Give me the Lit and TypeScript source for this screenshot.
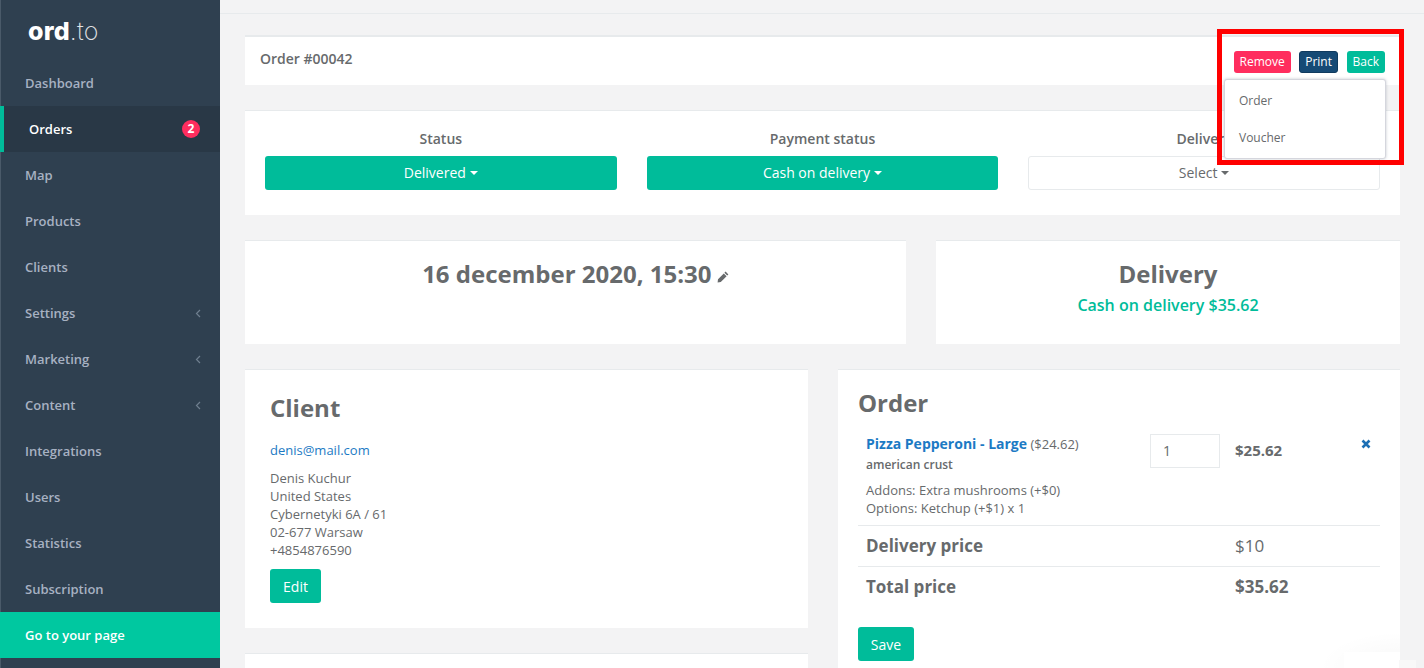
import { LitElement, html, css } from "lit";
import { customElement } from "lit/decorators.js";

const NAV: [string, boolean][] = [
  ["Dashboard", false],
  ["Orders", false],
  ["Map", false],
  ["Products", false],
  ["Clients", false],
  ["Settings", true],
  ["Marketing", true],
  ["Content", true],
  ["Integrations", false],
  ["Users", false],
  ["Statistics", false],
  ["Subscription", false],
];

@customElement("app-root")
export class AppRoot extends LitElement {
  static styles = css`
    :host {
      display: block;
      width: 1424px;
      height: 668px;
      overflow: hidden;
      position: relative;
      background: #f3f3f4;
      font-family: "Open Sans", sans-serif;
      font-size: 13px;
      color: #676a6c;
    }
    * { box-sizing: border-box; }
    .layout { display: flex; height: 668px; overflow: hidden; }
    .side {
      width: 220px;
      flex: none;
      background: #2f4050;
      border-left: 1px solid #4a5a69;
      height: 668px;
    }
    .logo {
      height: 60px;
      padding: 13px 0 0 27px;
      font-family: "Inter", sans-serif;
      font-size: 25px;
      line-height: 36px;
      color: #fff;
      font-weight: 800;
      letter-spacing: 0.2px;
    }
    .logo span { font-weight: 200; opacity: 0.85; }
    .nav { display: flex; flex-direction: column; }
    .item {
      height: 46px;
      display: flex;
      align-items: center;
      justify-content: space-between;
      padding: 0 19px 0 24px;
      font-weight: 600;
      color: #a7b1c2;
      line-height: 18px;
    }
    .item.active {
      background: #293846;
      color: #fff;
      margin-left: -1px;
      border-left: 4px solid #00bc9a;
      padding-left: 25px;
      padding-right: 20px;
    }
    .badge {
      width: 18px;
      height: 18px;
      border-radius: 50%;
      background: #ff2d5e;
      color: #fff;
      font-size: 12px;
      font-weight: 700;
      display: flex;
      align-items: center;
      justify-content: center;
    }
    .chev { width: 6px; height: 9px; }
    .go {
      height: 46px;
      margin-left: -1px;
      background: #00c8a0;
      color: #fff;
      font-weight: 600;
      display: flex;
      align-items: center;
      padding-left: 25px;
    }
    .main { flex: 1; min-width: 0; }
    .top { height: 14px; background: #f3f3f4; border-bottom: 1px solid #e7eaec; }
    .content { padding: 21px 24px 0 25px; display: flex; flex-direction: column; gap: 25px; }
    .panel { background: #fff; border-top: 1px solid #e7eaec; }
    .title {
      height: 50px;
      border-top-width: 2px;
      padding: 12px 15px 0 15px;
      font-weight: 600;
      font-size: 14px;
      line-height: 20px;
      display: flex;
      justify-content: space-between;
    }
    .status {
      height: 105px;
      padding: 18px 20px 0;
      display: grid;
      grid-template-columns: repeat(3, 1fr);
      gap: 30px;
      text-align: center;
      font-weight: 600;
      font-size: 14px;
      line-height: 20px;
    }
    .drop {
      margin-top: 7px;
      height: 34px;
      border-radius: 3px;
      background: #00bc9a;
      color: #fff;
      font-weight: 400;
      display: flex;
      align-items: center;
      justify-content: center;
      gap: 4px;
    }
    .drop.plain { background: #fff; color: #676a6c; border: 1px solid #e7eaec; }
    .caret {
      width: 0;
      height: 0;
      border-left: 4px solid transparent;
      border-right: 4px solid transparent;
      border-top: 4px solid currentColor;
    }
    .row { display: flex; justify-content: space-between; }
    .when { width: 661px; height: 104px; text-align: center; padding-top: 16px; }
    .deliv { width: 464px; height: 104px; text-align: center; padding-top: 16px; }
    .big { font-size: 24px; font-weight: 700; line-height: 33px; }
    .pen { width: 12px; height: 12px; margin-left: 2px; }
    .pay { color: #00bc9a; font-size: 16px; font-weight: 600; line-height: 22px; margin-top: 4px; }
    .lower { display: flex; justify-content: space-between; align-items: flex-start; }
    .left { width: 563px; display: flex; flex-direction: column; gap: 25px; }
    .client { height: 259px; padding: 21px 25px 0; }
    .h { font-size: 24px; font-weight: 700; line-height: 33px; margin: 0; }
    .mail { color: #1c7ac4; margin-top: 17px; line-height: 18px; }
    .addr { margin-top: 10px; line-height: 18px; }
    .btn {
      display: inline-flex;
      align-items: center;
      justify-content: center;
      height: 34px;
      border-radius: 3px;
      background: #00bc9a;
      color: #fff;
      font-size: 14px;
    }
    .edit { width: 51px; margin-top: 10px; }
    .stub { height: 60px; }
    .order { width: 562px; height: 320px; padding: 16px 20px 0; }
    .order .h { margin-bottom: 15px; }
    .line {
      display: grid;
      grid-template-columns: 284px 85px 1fr;
      padding: 0 8px;
      height: 92px;
      border-bottom: 1px solid #e7eaec;
      position: relative;
    }
    .name { line-height: 20px; font-size: 13px; }
    .name b { color: #1c7ac4; font-size: 14px; font-weight: 700; }
    .crust { font-size: 12px; font-weight: 600; line-height: 20px; margin-top: 1px; }
    .opts { line-height: 18px; margin-top: 6px; }
    .qty {
      width: 70px;
      height: 34px;
      border: 1px solid #e7eaec;
      padding-left: 12px;
      line-height: 32px;
      font-size: 14px;
    }
    .price { font-weight: 700; font-size: 15px; line-height: 32px; }
    .x { position: absolute; right: 9px; top: 5px; width: 10px; height: 10px; }
    .sum {
      display: grid;
      grid-template-columns: 369px 1fr;
      padding: 0 8px 2px;
      height: 41px;
      align-items: center;
      font-size: 17px;
      font-weight: 700;
      border-bottom: 1px solid #e7eaec;
    }
    .sum.last { border-bottom: none; padding-bottom: 3px; }
    .sum .v { font-weight: 400; font-size: 17px; }
    .sum .t { font-weight: 700; }
    .save { width: 56px; margin-top: 19px; }
    .actions { display: flex; gap: 8.5px; padding-top: 2px; }
    .mini {
      height: 22px;
      padding: 0 6px;
      border-radius: 3px;
      color: #fff;
      font-size: 12px;
      line-height: 22px;
      font-weight: 400;
    }
    .remove { background: #ff2d5e; }
    .print { background: #164a75; border: 1px solid #0f3a5e; line-height: 20px; padding: 0 5px; }
    .back { background: #00bc9a; }
    .menu {
      position: absolute;
      left: 1224px;
      top: 79px;
      width: 162px;
      height: 80px;
      background: #fff;
      border: 1px solid #d5d6dd;
      border-radius: 3px;
      box-shadow: 0 0 3px rgba(86, 96, 117, 0.35);
      font-size: 12px;
      padding: 2px 0 0 14px;
    }
    .menu div { height: 37px; line-height: 37px; }
    .mark {
      position: absolute;
      left: 1217px;
      top: 29px;
      width: 187px;
      height: 136px;
      border: 5px solid #ff0000;
      pointer-events: none;
    }
    .fade {
      position: absolute;
      left: 1320px;
      top: 632px;
      width: 80px;
      height: 36px;
      background: radial-gradient(ellipse at 100% 100%, rgba(0, 0, 0, 0.03), transparent 72%);
    }
    .fade-box {
      position: absolute;
      left: 1344px;
      top: 652px;
      width: 56px;
      height: 16px;
      background: #fff;
    }
    .fade-tab {
      position: absolute;
      left: 1399px;
      top: 660px;
      width: 17px;
      height: 8px;
      background: #f8f8f8;
    }
  `;

  render() {
    return html`
      <div class="layout">
        <aside class="side">
          <div class="logo">ord<span>.to</span></div>
          <nav class="nav">
            ${NAV.map(([label, sub]) =>
              html`<div class="item ${label === "Orders" ? "active" : ""}">
                <span>${label}</span>
                ${label === "Orders" ? html`<span class="badge">2</span>` : ""}
                ${sub
                  ? html`<svg class="chev" viewBox="0 0 6 9"><path d="M5 1 1.5 4.5 5 8" fill="none" stroke="#6f7f8f" stroke-width="1.2"/></svg>`
                  : ""}
              </div>`
            )}
            <div class="go">Go to your page</div>
          </nav>
        </aside>
        <main class="main">
          <div class="top"></div>
          <div class="content">
            <section class="panel title">
              <span>Order #00042</span>
              <div class="actions">
                <span class="mini remove">Remove</span>
                <span class="mini print">Print</span>
                <span class="mini back">Back</span>
              </div>
            </section>
            <section class="panel status">
              <div>Status<div class="drop">Delivered <i class="caret"></i></div></div>
              <div>Payment status<div class="drop">Cash on delivery <i class="caret"></i></div></div>
              <div>Delivery<div class="drop plain">Select <i class="caret"></i></div></div>
            </section>
            <div class="row">
              <section class="panel when">
                <span class="big">16 december 2020, 15:30</span>
                <svg class="pen" viewBox="0 0 12 12"><path d="M8.6.6 11.4 3.4 10.2 4.6 7.4 1.8zM6.8 2.4 9.6 5.2 3.8 11 .6 11.4 1 8.2z" fill="#676a6c"/></svg>
              </section>
              <section class="panel deliv">
                <div class="big">Delivery</div>
                <div class="pay">Cash on delivery $35.62</div>
              </section>
            </div>
            <div class="lower">
              <div class="left">
                <section class="panel client">
                  <h2 class="h">Client</h2>
                  <div class="mail">denis@mail.com</div>
                  <div class="addr">Denis Kuchur<br />United States<br />Cybernetyki 6A / 61<br />02-677 Warsaw<br />+4854876590</div>
                  <span class="btn edit">Edit</span>
                </section>
                <section class="panel stub"></section>
              </div>
              <section class="panel order">
                <h2 class="h">Order</h2>
                <div class="line">
                  <div>
                    <div class="name"><b>Pizza Pepperoni - Large</b> ($24.62)</div>
                    <div class="crust">american crust</div>
                    <div class="opts">Addons: Extra mushrooms (+$0)<br />Options: Ketchup (+$1) x 1</div>
                  </div>
                  <div class="qty">1</div>
                  <div class="price">$25.62</div>
                  <svg class="x" viewBox="0 0 10 10"><path d="M1.5 1.5l7 7M8.5 1.5l-7 7" stroke="#1c6fb5" stroke-width="2.6" fill="none"/></svg>
                </div>
                <div class="sum"><span>Delivery price</span><span class="v">$10</span></div>
                <div class="sum last"><span>Total price</span><span class="t">$35.62</span></div>
                <span class="btn save">Save</span>
              </section>
            </div>
          </div>
        </main>
      </div>
      <div class="menu"><div>Order</div><div>Voucher</div></div>
      <div class="mark"></div>
      <div class="fade"></div>
      <div class="fade-box"></div>
      <div class="fade-tab"></div>
    `;
  }
}
